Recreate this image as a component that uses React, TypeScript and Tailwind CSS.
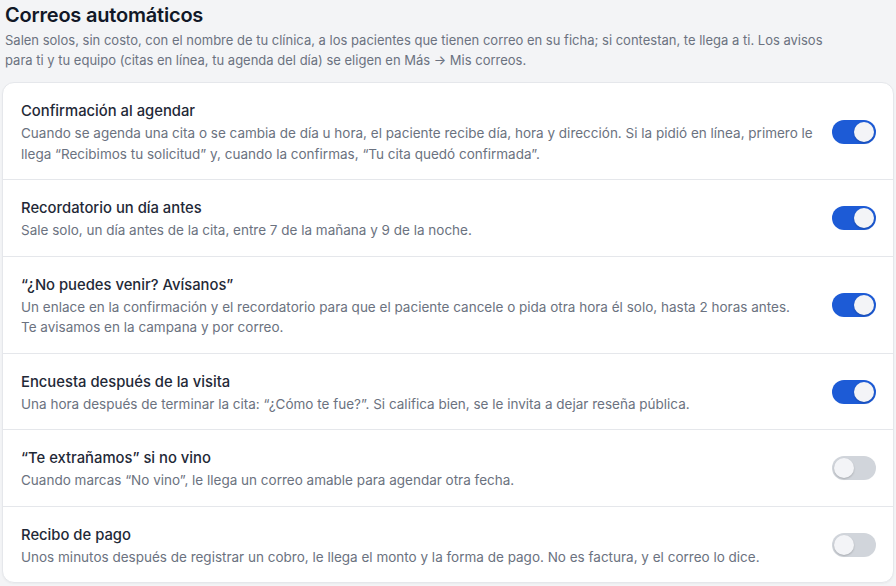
import React from "react";

type Item = { title: string; desc: string[]; on: boolean };

const items: Item[] = [
  {
    title: "Confirmación al agendar",
    desc: [
      "Cuando se agenda una cita o se cambia de día u hora, el paciente recibe día, hora y dirección. Si la pidió en línea, primero le llega “Recibimos tu solicitud” y, cuando la confirmas, “Tu cita quedó confirmada”.",
    ],
    on: true,
  },
  {
    title: "Recordatorio un día antes",
    desc: ["Sale solo, un día antes de la cita, entre 7 de la mañana y 9 de la noche."],
    on: true,
  },
  {
    title: "“¿No puedes venir? Avísanos”",
    desc: [
      "Un enlace en la confirmación y el recordatorio para que el paciente cancele o pida otra hora él solo, hasta 2 horas antes.",
      "Te avisamos en la campana y por correo.",
    ],
    on: true,
  },
  {
    title: "Encuesta después de la visita",
    desc: [
      "Una hora después de terminar la cita: “¿Cómo te fue?”. Si califica bien, se le invita a dejar reseña pública.",
    ],
    on: true,
  },
  {
    title: "“Te extrañamos” si no vino",
    desc: ["Cuando marcas “No vino”, le llega un correo amable para agendar otra fecha."],
    on: false,
  },
  {
    title: "Recibo de pago",
    desc: [
      "Unos minutos después de registrar un cobro, le llega el monto y la forma de pago. No es factura, y el correo lo dice.",
    ],
    on: false,
  },
];

function Toggle({ on }: { on: boolean }) {
  return (
    <div
      className={
        on
          ? "relative h-6 w-11 shrink-0 rounded-full bg-[#1d5bd6]"
          : "relative h-6 w-11 shrink-0 rounded-full bg-[#d1d5db]"
      }
    >
      <div
        className={
          on
            ? "absolute top-[2px] left-[22px] h-5 w-5 rounded-full bg-[#f3f4f7] shadow-[0_1px_2px_rgba(0,0,0,0.2)]"
            : "absolute top-[2px] left-[2px] h-5 w-5 rounded-full bg-[#f3f4f7] shadow-[0_1px_2px_rgba(0,0,0,0.2)]"
        }
      />
    </div>
  );
}

export default function App() {
  return (
    <div
      className="min-h-[586px] w-[896px] bg-[#f3f4f6] px-[2px] pt-[2px]"
      style={{ fontFamily: "Inter, 'Noto Sans', sans-serif" }}
    >
      <div className="pl-[3px]">
        <h1 className="text-[20px] leading-[26px] font-semibold text-[#111827] tracking-[-0.2px]">
          Correos automáticos
        </h1>
        <p className="mt-[2px] max-w-[820px] text-[13px] leading-[20px] text-[#6b7280]">
          Salen solos, sin costo, con el nombre de tu clínica, a los pacientes que tienen correo en su ficha; si contestan, te llega a ti. Los avisos para ti y tu equipo (citas en línea, tu agenda del día) se eligen en Más → Mis correos.
        </p>
      </div>
      <div className="mt-[12px] w-[892px] rounded-xl border border-[#e5e7eb] bg-white shadow-[0_1px_2px_rgba(0,0,0,0.04)]">
        {items.map((it, i) => (
          <div
            key={i}
            className={
              i === 0
                ? "flex items-center gap-4 pt-4 pb-[15px] pl-[18px] pr-[17px]"
                : "flex items-center gap-4 border-t border-[#e5e7eb] pt-4 pb-[15px] pl-[18px] pr-[17px]"
            }
          >
            <div className="min-w-0 flex-1">
              <div className="text-[14.8px] leading-[24px] font-medium text-[#1f2937]">
                {it.title}
              </div>
              <div className="text-[13.5px] leading-[20.5px] text-[#6b7280]">
                {it.desc.map((d, j) => (
                  <div key={j}>{d}</div>
                ))}
              </div>
            </div>
            <Toggle on={it.on} />
          </div>
        ))}
      </div>
    </div>
  );
}
